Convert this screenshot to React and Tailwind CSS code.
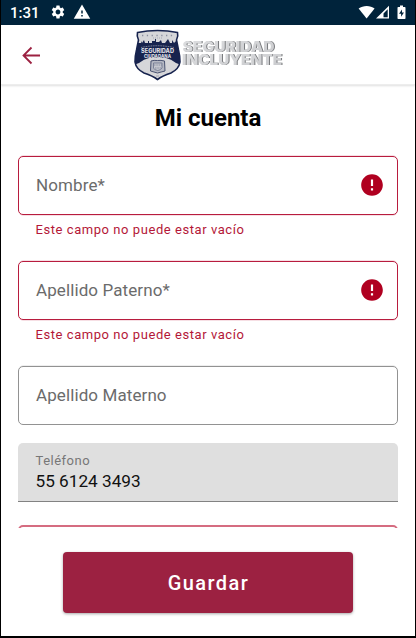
import { MdSettings, MdWarning, MdError } from 'react-icons/md';

function StatusBar() {
  return (
    <div className="flex h-[25px] shrink-0 items-center bg-[#00233b] pl-[9px] pr-[7px] text-white">
      <span className="w-[30px] whitespace-nowrap pt-px text-[15px] font-medium leading-[24px]">1:31</span>
      <MdSettings className="ml-[10px] size-4 -translate-y-px" />
      <MdWarning className="ml-[7px] size-[18px] -translate-y-px" />
      <svg className="ml-auto h-[15px] w-[50px]" viewBox="0 0 50 15" fill="currentColor">
        <path d="M0.6 3.6C5 0 12.400 0 16.600 3.600L8.600 13.600Z" />
        <path fillRule="evenodd" d="M18 13.500L31 .8V13.500ZM25.500 12.200H29.700V4.300L25.500 8.500Z" />
        <path fillRule="evenodd" d="M42 .5H45V2H46.700Q47.500 2 47.500 2.800V13.200Q47.500 14 46.700 14H40.300Q39.500 14 39.500 13.200V2.800Q39.500 2 40.300 2H42ZM44 4.500L41 8.700H43.100V11.700L46 7.500H44Z" />
      </svg>
    </div>
  );
}

const SHIELD = 'M3.500 3.500Q13 1.500 23.500 1.500Q34 1.500 43.500 3.500Q44.500 7 42.500 11Q43.500 16 44.500 21Q46 27 46 33Q45 40 37 44Q28 47 23.500 50.500Q19 47 10 44Q2 40 1 33Q1 27 2.500 21Q3.500 16 4.500 11Q2.500 7 3.500 3.500Z';

function Logo() {
  return (
    <svg className="h-[52px] w-[152px]" viewBox="0 0 152 52">
      <defs>
        <linearGradient id="silver" x1="0" y1="0" x2="1" y2="1">
          <stop offset="0" stopColor="#dedfe1" />
          <stop offset="1" stopColor="#c9cacd" />
        </linearGradient>
        <clipPath id="shield"><path d={SHIELD} /></clipPath>
      </defs>
      <path d={SHIELD} fill="#d6d6d9" />
      <g clipPath="url(#shield)">
        <path d="M0 18L4 14H7V12L8 14L10 11L11 14H14V12H15V14H18V12H21V10H22V13H25L27 11L28 14H31L34 10L36 14H38V11L40 14L42 12L47 18V36L42 34Q37 30 32 29Q23.500 28 15 29Q10 30 5 34L0 36Z" fill="#17234e" />
        <path d="M8 6.500H40" stroke="#8c90a1" strokeWidth="1.300" strokeDasharray="1.300 3.500" />
        <path d="M19 9H28" stroke="#9fa2b0" strokeWidth=".8" strokeDasharray="1 1" />
        <path d="M7 18.500Q23 15 40 18.500" stroke="#9296a8" strokeWidth="1" strokeDasharray="1 .7" fill="none" />
      </g>
      <path d={SHIELD} fill="none" stroke="#17234e" strokeWidth="1.600" />
      <g fill="#dfdfe3" fontFamily="Inter, sans-serif" fontWeight="800">
        <text x="7" y="24.300" fontSize="6" textLength="33" lengthAdjust="spacingAndGlyphs">SEGURIDAD</text>
        <text x="10" y="29" fontSize="4.500" textLength="27" lengthAdjust="spacingAndGlyphs">CIUDADANA</text>
      </g>
      <path d="M17 32Q20 31 23.500 31.500Q27 31 30.500 32L31 42Q27 43 23.500 44Q20 43 16.500 42Z" fill="#b5b8c3" stroke="#4a5371" strokeWidth="1" />
      <path d="M19.500 34H28V39Q27 41 23.800 41.500Q20 41 19.500 39Z" fill="#c5c7cf" stroke="#6b728c" strokeWidth=".8" />
      <path d="M20 36H28M21 39H27" stroke="#7b8197" strokeWidth=".8" strokeDasharray="1.500 .8" />
      <path d="M22 47H25" stroke="#9296a8" strokeWidth=".8" />
      <g className="drop-shadow-[1px_0.8px_0_#77797c]" fill="url(#silver)" fontFamily="Inter, sans-serif" fontWeight="900" fontSize="14">
        <text x="48.500" y="22.500" textLength="92" lengthAdjust="spacingAndGlyphs">SEGURIDAD</text>
        <text x="48" y="35.500" textLength="100" lengthAdjust="spacingAndGlyphs">INCLUYENTE</text>
      </g>
    </svg>
  );
}

function Header() {
  return (
    <header className="flex h-[60px] shrink-0 items-center border-b border-[#ededed] bg-white pl-[18px] shadow-[0_1px_2px_rgba(0,0,0,0.13)]">
      <svg className="size-6 text-[#9c2141]" viewBox="0 0 24 24" fill="none" stroke="currentColor" strokeWidth="1.800">
        <path d="M21 12.500H5M12.500 4.500L4.500 12.500L12.500 20.500" />
      </svg>
      <div className="ml-[91px] pt-px"><Logo /></div>
    </header>
  );
}

function OutlinedField({ label, error }) {
  return (
    <div className={error ? 'h-[105px]' : 'h-[77px]'}>
      <div className={`flex h-[59px] items-center justify-between rounded-[5px] border pl-[17px] pr-[12px] ${error ? 'border-[#b81c3e] shadow-[0_1px_0_-0.5px_#edc0ca,0_-1px_0_-0.5px_#edc0ca]' : 'border-[#929292] shadow-[0_-1px_0_-0.5px_#dddddd]'}`}>
        <span className="text-[17px] tracking-[0.100px] text-[#6b6b6b]">{label}</span>
        {error && <MdError className="mb-px size-[26px] text-[#b00020]" />}
      </div>
      {error && <p className="pl-[17.500px] pt-[4.500px] text-[13px] leading-[20px] tracking-[0.560px] text-[#b41738]">{error}</p>}
    </div>
  );
}

export default function App() {
  const required = 'Este campo no puede estar vacío';
  return (
    <div className="flex h-[638px] w-[416px] flex-col overflow-hidden border-x border-b-2 border-black bg-white font-['Roboto',sans-serif]">
      <StatusBar />
      <Header />
      <main className="h-[443px] shrink-0 overflow-hidden px-[17px]">
        <h1 className="h-[71px] pt-[17px] text-center text-[24px] font-bold leading-[32px] text-black">Mi cuenta</h1>
        <OutlinedField label="Nombre*" error={required} />
        <OutlinedField label="Apellido Paterno*" error={required} />
        <OutlinedField label="Apellido Materno" />
        <div className="h-[59px] rounded-t-[5px] border-b border-[#828282] bg-[#dfdfdf] pl-[17.500px] pt-[10px]">
          <div className="text-[13px] leading-[16px] tracking-[0.500px] text-[#777]">Teléfono</div>
          <div className="text-[17.200px] leading-[24px] text-[#111]">55 6124 3493</div>
        </div>
        <div className="mt-[23px] h-[60px] rounded-[5px] border-2 border-[#d56c80]" />
      </main>
      <div className="flex justify-center pt-[24px]">
        <button className="h-[61px] w-[290px] rounded-[4px] bg-[#9c2141] pl-px pt-px text-[20px] font-medium tracking-[1.400px] text-white shadow-[0_1px_3px_rgba(0,0,0,0.35)]">Guardar</button>
      </div>
    </div>
  );
}
